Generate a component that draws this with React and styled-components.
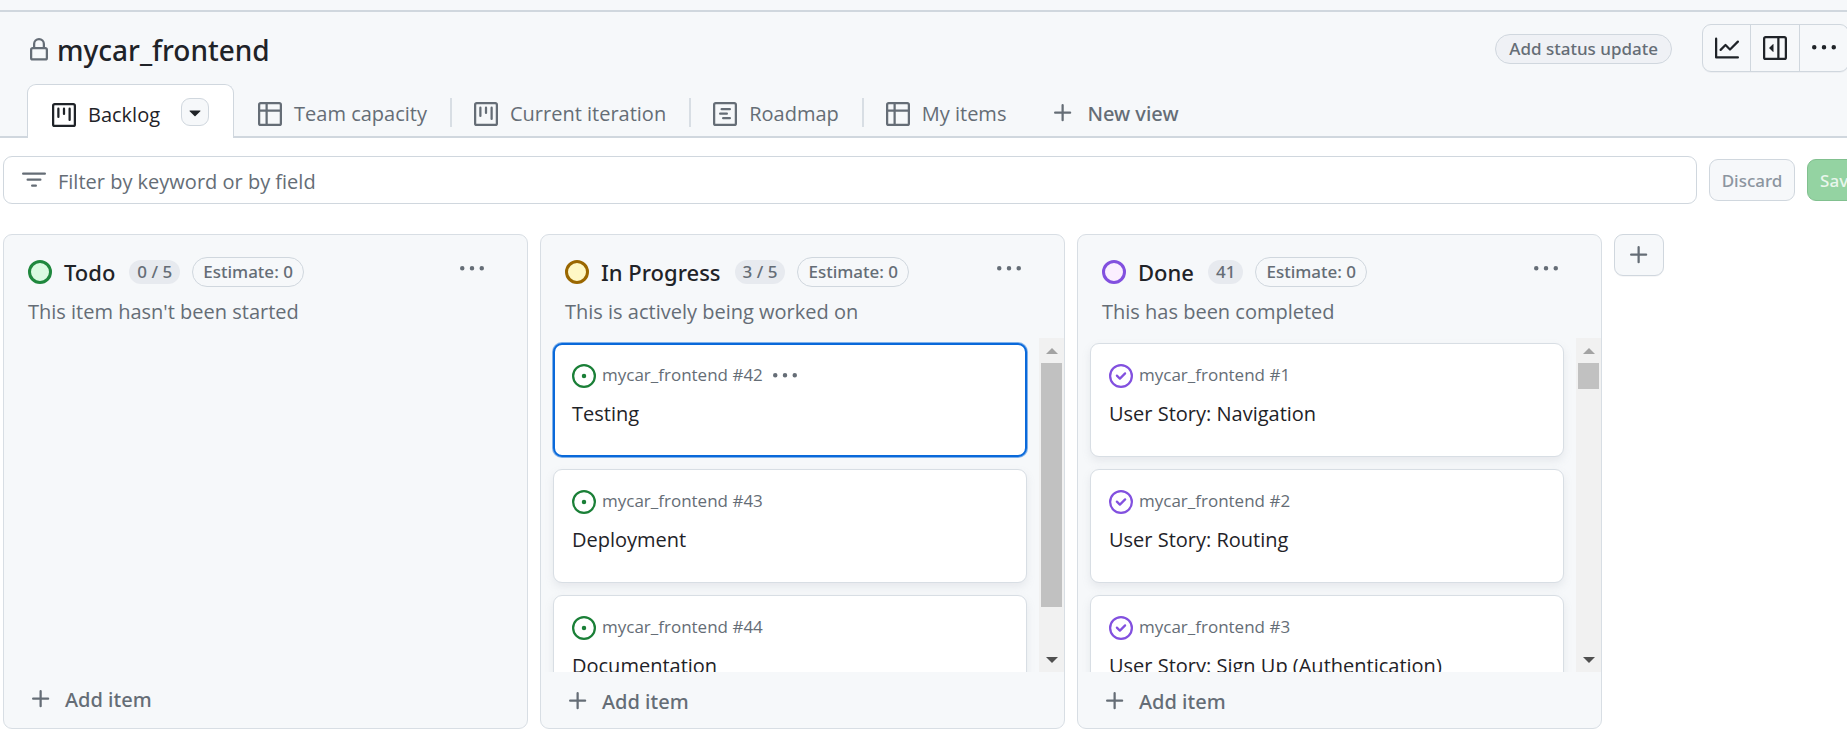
import React from 'react';
import styled, { createGlobalStyle, css } from 'styled-components';

const GlobalStyle = createGlobalStyle`
  *, *::before, *::after { box-sizing: border-box; }
  body { margin: 0; background: #fff; }
  button, input { font: inherit; color: inherit; }
  button { cursor: pointer; }
`;

const color = {
  text: '#1f2328',
  muted: '#656d76',
  border: '#d0d7de',
  cardBorder: '#d8dee4',
  subtle: '#f6f8fa',
  accent: '#0969da',
  open: '#1a7f37',
  done: '#8250df',
};

const medium = css`
  font-family: 'Noto Sans', 'Open Sans', sans-serif;
  font-weight: 500;
`;

/* ---------- icons ---------- */

const FRAME =
  'M1.75 0h12.5C15.216 0 16 .784 16 1.75v12.5A1.75 1.75 0 0 1 14.25 16H1.75A1.75 1.75 0 0 1 0 14.25V1.75C0 .784.784 0 1.75 0ZM1.5 1.75v12.5c0 .138.112.25.25.25h12.5a.25.25 0 0 0 .25-.25V1.75a.25.25 0 0 0-.25-.25H1.75a.25.25 0 0 0-.25.25Z';

const PATHS = {
  lock: 'M4 4a4 4 0 0 1 8 0v2h.25c.966 0 1.75.784 1.75 1.75v5.5A1.75 1.75 0 0 1 12.25 15h-8.5A1.75 1.75 0 0 1 2 13.25v-5.5C2 6.784 2.784 6 3.75 6H4Zm8.25 3.5h-8.5a.25.25 0 0 0-.25.25v5.5c0 .138.112.25.25.25h8.5a.25.25 0 0 0 .25-.25v-5.5a.25.25 0 0 0-.25-.25ZM10.5 6V4a2.5 2.5 0 1 0-5 0v2Z',
  board:
    FRAME +
    'M11.75 3a.75.75 0 0 1 .75.75v7.5a.75.75 0 0 1-1.5 0v-7.5a.75.75 0 0 1 .75-.75Zm-8.25.75a.75.75 0 0 1 1.5 0v5.5a.75.75 0 0 1-1.5 0ZM8 3a.75.75 0 0 1 .75.75v3.5a.75.75 0 0 1-1.5 0v-3.5A.75.75 0 0 1 8 3Z',
  table:
    'M0 1.75C0 .784.784 0 1.75 0h12.5C15.216 0 16 .784 16 1.75v12.5A1.75 1.75 0 0 1 14.25 16H1.75A1.75 1.75 0 0 1 0 14.25ZM6.5 6.5v8h7.75a.25.25 0 0 0 .25-.25V6.5Zm8-1.5V1.75a.25.25 0 0 0-.25-.25H6.5V5Zm-13 1.5v7.75c0 .138.112.25.25.25H5v-8ZM5 5V1.5H1.75a.25.25 0 0 0-.25.25V5Z',
  roadmap:
    FRAME +
    'M4.75 7a.75.75 0 0 0 0 1.5h4.5a.75.75 0 0 0 0-1.5ZM5 4.75A.75.75 0 0 1 5.75 4h5.5a.75.75 0 0 1 0 1.5h-5.5A.75.75 0 0 1 5 4.75ZM6.75 10a.75.75 0 0 0 0 1.5h4.5a.75.75 0 0 0 0-1.5Z',
  filter:
    'M.75 3h14.5a.75.75 0 0 1 0 1.5H.75a.75.75 0 0 1 0-1.5ZM3 7.75A.75.75 0 0 1 3.75 7h8.5a.75.75 0 0 1 0 1.5h-8.5A.75.75 0 0 1 3 7.75Zm3 4a.75.75 0 0 1 .75-.75h2.5a.75.75 0 0 1 0 1.5h-2.5a.75.75 0 0 1-.75-.75Z',
  graph:
    'M1.5 1.75V13.5h13.75a.75.75 0 0 1 0 1.5H.75a.75.75 0 0 1-.75-.75V1.75a.75.75 0 0 1 1.5 0Zm14.28 2.53-5.25 5.25a.75.75 0 0 1-1.06 0L7 7.06 4.28 9.78a.751.751 0 0 1-1.042-.018.751.751 0 0 1-.018-1.042l3.25-3.25a.75.75 0 0 1 1.06 0L10 7.94l4.72-4.72a.751.751 0 0 1 1.042.018.751.751 0 0 1 .018 1.042Z',
  sidebar:
    'M1.75 0h12.5C15.216 0 16 .784 16 1.75v12.5A1.75 1.75 0 0 1 14.25 16H1.75A1.75 1.75 0 0 1 0 14.25V1.75C0 .784.784 0 1.75 0ZM1.5 1.75v12.5c0 .138.112.25.25.25H9.5v-13H1.75a.25.25 0 0 0-.25.25ZM11 14.5h3.25a.25.25 0 0 0 .25-.25V1.75a.25.25 0 0 0-.25-.25H11ZM7 5.604v4.792a.25.25 0 0 1-.427.177L4.177 8.177a.25.25 0 0 1 0-.354l2.396-2.396A.25.25 0 0 1 7 5.604Z',
  kebab:
    'M8 9a1.5 1.5 0 1 0 0-3 1.5 1.5 0 0 0 0 3ZM1.5 9a1.5 1.5 0 1 0 0-3 1.5 1.5 0 0 0 0 3Zm13 0a1.5 1.5 0 1 0 0-3 1.5 1.5 0 0 0 0 3Z',
  plus: 'M7.75 2a.75.75 0 0 1 .75.75V7h4.25a.75.75 0 0 1 0 1.5H8.5v4.25a.75.75 0 0 1-1.5 0V8.5H2.75a.75.75 0 0 1 0-1.5H7V2.75A.75.75 0 0 1 7.75 2Z',
  caret:
    'm4.427 7.427 3.396 3.396a.25.25 0 0 0 .354 0l3.396-3.396A.25.25 0 0 0 11.396 7H4.604a.25.25 0 0 0-.177.427Z',
  open: 'M8 9.5a1.5 1.5 0 1 0 0-3 1.5 1.5 0 0 0 0 3ZM8 0a8 8 0 1 1 0 16A8 8 0 0 1 8 0ZM1.5 8a6.5 6.5 0 1 0 13 0 6.5 6.5 0 0 0-13 0Z',
  closed:
    'M11.28 6.78a.75.75 0 0 0-1.06-1.06L7.25 8.69 5.78 7.22a.75.75 0 0 0-1.06 1.06l2 2a.75.75 0 0 0 1.06 0l3.5-3.5ZM16 8A8 8 0 1 1 0 8a8 8 0 0 1 16 0Zm-1.5 0a6.5 6.5 0 1 0-13 0 6.5 6.5 0 0 0 13 0Z',
};

const Svg = styled.svg`
  display: block;
  flex: none;
  fill: ${(p) => p.$color || 'currentColor'};
`;

const Icon = ({ name, tint }) => (
  <Svg width="24" height="24" viewBox="0 0 16 16" $color={tint} aria-hidden="true">
    <path fillRule={name === 'caret' ? undefined : 'evenodd'} d={PATHS[name]} />
  </Svg>
);

/* ---------- page ---------- */

const Page = styled.div`
  height: 100vh;
  display: flex;
  flex-direction: column;
  overflow: hidden;
  color: ${color.text};
  font: 400 20px/30px 'Open Sans', 'Noto Sans', sans-serif;
`;

const TopStrip = styled.div`
  flex: none;
  height: 12px;
  background: ${color.subtle};
  border-bottom: 2px solid ${color.border};
`;

const Header = styled.header`
  flex: none;
  display: flex;
  align-items: center;
  height: 72px;
  margin-right: -2px;
  padding-left: 27px;
  background: ${color.subtle};
  color: ${color.muted};
`;

const TitleBlock = styled.div`
  flex: 1;
  display: flex;
  align-items: center;
  gap: 6px;
  padding-top: 4px;
`;

const Title = styled.h1`
  ${medium}
  margin: 0;
  font-size: 28px;
  line-height: 40px;
  color: ${color.text};
`;

const StatusButton = styled.button`
  ${medium}
  height: 30px;
  margin: 2px 30px 0 0;
  padding: 0 13px;
  border: 1px solid ${color.border};
  border-radius: 15px;
  background: #eff1f5;
  color: ${color.muted};
  font-size: 17px;
  line-height: 28px;
`;

const ButtonGroup = styled.div`
  display: flex;
  height: 48px;
  border: 1px solid ${color.border};
  border-radius: 9px;
  box-shadow: 0 1px 0 rgba(31, 35, 40, 0.04);
  color: ${color.text};
`;

const GroupButton = styled.button`
  display: grid;
  place-items: center;
  width: 47px;
  padding: 0;
  border: 0;
  background: none;

  & + & {
    width: 49px;
    border-left: 1px solid ${color.border};
  }
`;

const Tabs = styled.nav`
  flex: none;
  display: flex;
  align-items: stretch;
  height: 54px;
  padding-left: 27px;
  background: ${color.subtle};
  box-shadow: inset 0 -2px 0 ${color.border};
  color: ${color.muted};
`;

const ActiveTab = styled.div`
  display: flex;
  align-items: center;
  gap: 21px;
  padding: 6px 24px 0;
  border: 1px solid ${color.border};
  border-bottom: 0;
  border-radius: 9px 9px 0 0;
  background: #fff;
  color: ${color.text};
`;

const TabLink = styled.a`
  display: flex;
  align-items: center;
  gap: 12px;
  color: inherit;
  text-decoration: none;
`;

const TabItem = styled.div`
  display: flex;
  align-items: center;
  padding: 6px 23px 0 24px;

  & + &::before {
    content: '';
    width: 2px;
    height: 29px;
    margin: 0 22px 4px -24px;
    background: #d8dee4;
  }
`;

const CaretButton = styled.button`
  display: grid;
  place-items: center;
  width: 28px;
  height: 28px;
  margin-bottom: 6px;
  padding: 0;
  border: 1px solid ${color.border};
  border-radius: 9px;
  background: ${color.subtle};
`;

const PlusButton = styled.button`
  ${medium}
  display: flex;
  align-items: center;
  gap: 12px;
  padding: 0;
  border: 0;
  background: none;
  color: ${color.muted};

  & > svg {
    margin-bottom: 3px;
  }
`;

const NewViewButton = styled(PlusButton)`
  padding: 6px 22px 0;
`;

const Toolbar = styled.form`
  flex: none;
  display: flex;
  align-items: center;
  gap: 12px;
  padding: 18px 0 0 3px;
  margin-right: -24px;
`;

const FilterBox = styled.label`
  flex: 1;
  display: flex;
  align-items: center;
  gap: 12px;
  height: 48px;
  padding: 0 18px;
  border: 1px solid ${color.border};
  border-radius: 9px;
  color: ${color.muted};
`;

const FilterInput = styled.input`
  flex: 1;
  min-width: 0;
  padding: 3px 0 0;
  border: 0;
  outline: 0;
  background: none;

  &::placeholder {
    color: ${color.muted};
    opacity: 1;
  }
`;

const ActionButton = styled.button`
  ${medium}
  width: ${(p) => (p.$primary ? '64px' : '86px')};
  height: 42px;
  padding: 2px 0 0;
  border: 1px solid ${(p) => (p.$primary ? '#81c08f' : color.border)};
  border-radius: 9px;
  background: ${(p) => (p.$primary ? '#94d3a2' : color.subtle)};
  color: ${(p) => (p.$primary ? '#e9f6ec' : '#8c959f')};
  font-size: 17px;
  line-height: 24px;
`;

/* ---------- board ---------- */

const Board = styled.main`
  flex: 1;
  min-height: 0;
  display: flex;
  gap: 12px;
  padding: 30px 3px 2px;
`;

const ColumnBox = styled.section`
  flex: none;
  width: 525px;
  display: flex;
  flex-direction: column;
  border: 1px solid ${color.cardBorder};
  border-radius: 9px;
  background: ${color.subtle};
  overflow: hidden;
`;

const ColumnHeader = styled.header`
  flex: none;
  height: 103px;
  padding: 22px 43px 0 24px;
`;

const ColumnTitleRow = styled.div`
  display: flex;
  align-items: center;
  gap: 12px;
  height: 30px;
`;

const StatusDot = styled.span`
  width: 24px;
  height: 24px;
  border: 3px solid ${(p) => p.$ring};
  border-radius: 50%;
  background: ${(p) => p.$fill};
`;

const ColumnTitle = styled.h2`
  ${medium}
  margin: 0 2px 0 0;
  font-size: 22px;
  line-height: 30px;
`;

const Counter = styled.span`
  ${medium}
  height: 24px;
  padding: 0 8px;
  border-radius: 12px;
  background: #e7eaef;
  color: ${color.muted};
  font-size: 17px;
  line-height: 24px;
`;

const Estimate = styled.span`
  ${medium}
  height: 30px;
  padding: 0 10px;
  border: 1px solid ${color.border};
  border-radius: 15px;
  color: ${color.muted};
  font-size: 17px;
  line-height: 28px;
`;

const IconButton = styled.button`
  padding: 0;
  border: 0;
  background: none;
  color: ${color.muted};
`;

const ColumnMenu = styled(IconButton)`
  align-self: flex-start;
  margin-left: auto;
`;

const Description = styled.p`
  margin: 10px 0 0;
  color: ${color.muted};
`;

const ColumnBody = styled.div`
  flex: 1;
  min-height: 0;
  display: flex;
`;

const CardList = styled.ul`
  flex: 1;
  display: flex;
  flex-direction: column;
  gap: 12px;
  margin: 0;
  padding: 5px 12px 12px;
  list-style: none;
  overflow-y: auto;
  scrollbar-width: none;
`;

const CardItem = styled.li`
  flex: none;
  height: 114px;
  padding: 17px 18px;
  border: 1px solid ${color.cardBorder};
  border-radius: 9px;
  background: #fff;
  box-shadow: 0 4px 9px rgba(140, 149, 159, 0.15);

  ${(p) =>
    p.$selected &&
    css`
      padding: 16px 17px;
      border: 2px solid ${color.accent};
      box-shadow: 0 0 0 1px rgba(9, 105, 218, 0.5);
    `}
`;

const CardMeta = styled.div`
  display: flex;
  align-items: center;
  gap: 6px;
  height: 30px;
  color: ${color.muted};
  font-size: 17px;
  line-height: 24px;
`;

const CardNumber = styled.span`
  margin: 0 4px 2px 0;
`;

const CardTitle = styled.a`
  display: block;
  margin-top: 8px;
  color: ${color.text};
  text-decoration: none;
`;

const ScrollTrack = styled.div`
  flex: none;
  width: 25px;
  display: flex;
  flex-direction: column;
  padding: 0 2px;
  background: #f1f1f1;
`;

const ScrollArrow = styled.span`
  flex: none;
  display: grid;
  place-items: center;
  height: 25px;

  &::before {
    content: '';
    border: 6px solid transparent;
    ${(p) =>
      p.$down
        ? css`
            border-top-color: #505050;
            border-bottom: 0;
          `
        : css`
            border-bottom-color: #a3a3a3;
            border-top: 0;
          `}
  }
`;

const ScrollRail = styled.div`
  flex: 1;
`;

const ScrollThumb = styled.div`
  background: #c1c1c1;
`;

const ColumnFooter = styled.footer`
  flex: none;
  padding: ${(p) => (p.$scrolls ? '15px 25px 11px' : '13px 25px 13px')};
`;

const AddColumnButton = styled.button`
  flex: none;
  display: grid;
  place-items: center;
  width: 50px;
  height: 42px;
  padding: 0;
  border: 1px solid ${color.border};
  border-radius: 9px;
  background: ${color.subtle};
  box-shadow: 0 1px 0 rgba(31, 35, 40, 0.04);
  color: ${color.muted};
`;

/* ---------- data ---------- */

const views = [
  { icon: 'table', label: 'Team capacity' },
  { icon: 'board', label: 'Current iteration' },
  { icon: 'roadmap', label: 'Roadmap' },
  { icon: 'table', label: 'My items' },
];

const columns = [
  {
    title: 'Todo',
    count: '0 / 5',
    note: "This item hasn't been started",
    ring: '#1f883d',
    fill: '#dafbe1',
    cards: [],
  },
  {
    title: 'In Progress',
    count: '3 / 5',
    note: 'This is actively being worked on',
    ring: '#9a6700',
    fill: '#fff8c5',
    state: 'open',
    visible: 0.86,
    cards: [
      { number: 42, title: 'Testing', selected: true },
      { number: 43, title: 'Deployment' },
      { number: 44, title: 'Documentation' },
    ],
  },
  {
    title: 'Done',
    count: '41',
    note: 'This has been completed',
    ring: '#8250df',
    fill: '#fbefff',
    state: 'closed',
    visible: 0.09,
    cards: [
      { number: 1, title: 'User Story: Navigation' },
      { number: 2, title: 'User Story: Routing' },
      { number: 3, title: 'User Story: Sign Up (Authentication)' },
    ],
  },
];

const Card = ({ card, state }) => (
  <CardItem $selected={card.selected}>
    <CardMeta>
      <Icon name={state} tint={state === 'open' ? color.open : color.done} />
      <CardNumber>mycar_frontend #{card.number}</CardNumber>
      {card.selected && (
        <IconButton type="button" aria-label="Card actions">
          <Icon name="kebab" />
        </IconButton>
      )}
    </CardMeta>
    <CardTitle href={`#${card.number}`}>{card.title}</CardTitle>
  </CardItem>
);

const Column = ({ column }) => {
  const scrolls = column.cards.length > 0;
  return (
    <ColumnBox>
      <ColumnHeader>
        <ColumnTitleRow>
          <StatusDot $ring={column.ring} $fill={column.fill} />
          <ColumnTitle>{column.title}</ColumnTitle>
          <Counter>{column.count}</Counter>
          <Estimate>Estimate: 0</Estimate>
          <ColumnMenu type="button" aria-label={`${column.title} actions`}>
            <Icon name="kebab" />
          </ColumnMenu>
        </ColumnTitleRow>
        <Description>{column.note}</Description>
      </ColumnHeader>
      <ColumnBody>
        {scrolls && (
          <>
            <CardList>
              {column.cards.map((card) => (
                <Card key={card.number} card={card} state={column.state} />
              ))}
            </CardList>
            <ScrollTrack aria-hidden="true">
              <ScrollArrow />
              <ScrollRail>
                <ScrollThumb style={{ height: `${column.visible * 100}%` }} />
              </ScrollRail>
              <ScrollArrow $down />
            </ScrollTrack>
          </>
        )}
      </ColumnBody>
      <ColumnFooter $scrolls={scrolls}>
        <PlusButton type="button">
          <Icon name="plus" />
          Add item
        </PlusButton>
      </ColumnFooter>
    </ColumnBox>
  );
};

export default function App() {
  return (
    <>
      <GlobalStyle />
      <Page>
        <TopStrip />
        <Header>
          <TitleBlock>
            <Icon name="lock" />
            <Title>mycar_frontend</Title>
          </TitleBlock>
          <StatusButton type="button">Add status update</StatusButton>
          <ButtonGroup>
            <GroupButton type="button" aria-label="Insights">
              <Icon name="graph" />
            </GroupButton>
            <GroupButton type="button" aria-label="Project details">
              <Icon name="sidebar" />
            </GroupButton>
            <GroupButton type="button" aria-label="More options">
              <Icon name="kebab" />
            </GroupButton>
          </ButtonGroup>
        </Header>
        <Tabs aria-label="Views">
          <ActiveTab>
            <TabLink href="#backlog" aria-current="page">
              <Icon name="board" />
              Backlog
            </TabLink>
            <CaretButton type="button" aria-label="View options">
              <Icon name="caret" />
            </CaretButton>
          </ActiveTab>
          {views.map((view) => (
            <TabItem key={view.label}>
              <TabLink href="#view">
                <Icon name={view.icon} />
                {view.label}
              </TabLink>
            </TabItem>
          ))}
          <NewViewButton type="button">
            <Icon name="plus" />
            New view
          </NewViewButton>
        </Tabs>
        <Toolbar>
          <FilterBox>
            <Icon name="filter" />
            <FilterInput
              type="text"
              aria-label="Filter by keyword or by field"
              placeholder="Filter by keyword or by field"
            />
          </FilterBox>
          <ActionButton type="button">Discard</ActionButton>
          <ActionButton type="button" $primary>
            Save
          </ActionButton>
        </Toolbar>
        <Board>
          {columns.map((column) => (
            <Column key={column.title} column={column} />
          ))}
          <AddColumnButton type="button" aria-label="Add column">
            <Icon name="plus" />
          </AddColumnButton>
        </Board>
      </Page>
    </>
  );
}
